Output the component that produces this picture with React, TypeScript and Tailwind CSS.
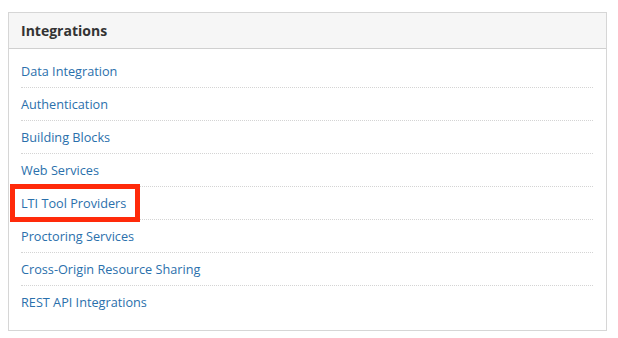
const links = [
  'Data Integration',
  'Authentication',
  'Building Blocks',
  'Web Services',
  'LTI Tool Providers',
  'Proctoring Services',
  'Cross-Origin Resource Sharing',
  'REST API Integrations',
];

export default function App() {
  return (
    <div className="min-h-[338px] w-[618px] bg-white pl-[8px] pt-[12px]" style={{ fontFamily: '"Open Sans", "Liberation Sans", sans-serif' }}>
      <div className="w-[599px] border border-[#d6d6d6] bg-white">
        <div className="flex h-[36px] items-center border-b border-[#d0d0d0] bg-[#f6f6f6] px-[12px]">
          <h2 className="text-[14px] font-bold text-[#333]">Integrations</h2>
        </div>
        <ul className="pb-[11px] pl-[12px] pr-[13px] pt-[6px]">
          {links.map((label, i) => (
            <li
              key={label}
              className={`relative flex h-[33px] items-center ${i < links.length - 1 ? 'border-b border-dotted border-[#d4d4d4]' : ''}`}
            >
              <a href="#" className="text-[12.7px] leading-none text-[#2a70ac]">
                {label}
              </a>
              {label === 'LTI Tool Providers' && (
                <span className="pointer-events-none absolute left-[-11px] top-[-3px] h-[38px] w-[130px] border-[5px] border-[#ff2a0a]" />
              )}
            </li>
          ))}
        </ul>
      </div>
    </div>
  );
}
